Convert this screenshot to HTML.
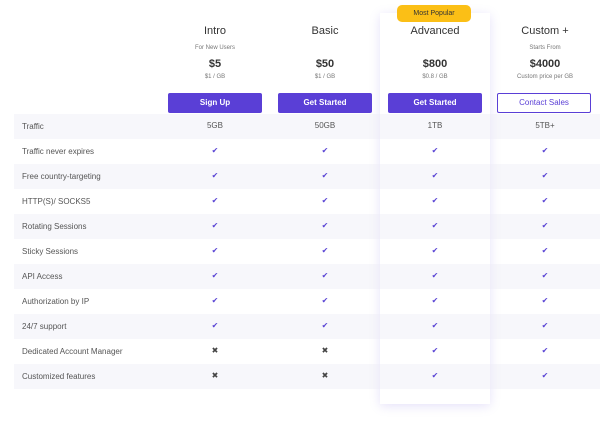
<!DOCTYPE html>
<html><head><style>
*{margin:0;padding:0;box-sizing:border-box}
body{width:612px;height:424px;background:#fff;font-family:"Liberation Sans",sans-serif;position:relative;overflow:hidden;color:#333}
.card{position:absolute;left:380px;top:13px;width:110px;height:391px;background:#fff;box-shadow:0 2px 10px rgba(110,90,220,.18);z-index:2}
.badge{position:absolute;left:397px;top:5px;width:74px;height:17px;background:#fbbf16;border-radius:5px;font-size:7px;text-align:center;line-height:17px;color:#333;z-index:5}
.row{position:absolute;left:14px;width:586px;height:25px;font-size:8px;color:#555;line-height:25px;z-index:3}
.row.s{background:rgba(235,235,245,.4)}
.row .l{position:absolute;left:8px}
.c{position:absolute;width:110px;text-align:center;z-index:4;font-size:8px;color:#555}
.t{position:absolute;width:110px;text-align:center;z-index:4}
.ck{color:#5a45d4;font-size:8px}
.x{color:#444;font-size:8px}
.btn{position:absolute;top:93px;width:94px;height:20px;background:#5a3fd6;color:#fff;font-size:8px;font-weight:bold;text-align:center;line-height:20px;border-radius:2px;z-index:4}
</style></head><body>
<div class="card"></div>
<div class="badge">Most Popular</div>

<div class="t" style="left:160px;top:25px;font-size:11px;color:#333">Intro</div>
<div class="t" style="left:270px;top:25px;font-size:11px;color:#333">Basic</div>
<div class="t" style="left:380px;top:25px;font-size:11px;color:#333">Advanced</div>
<div class="t" style="left:490px;top:25px;font-size:11px;color:#333">Custom +</div>

<div class="t" style="left:160px;top:45px;font-size:6px;color:#777">For New Users</div>
<div class="t" style="left:490px;top:45px;font-size:6px;color:#777">Starts From</div>

<div class="t" style="left:160px;top:58px;font-size:11px;font-weight:bold;color:#333">$5</div>
<div class="t" style="left:270px;top:58px;font-size:11px;font-weight:bold;color:#333">$50</div>
<div class="t" style="left:380px;top:58px;font-size:11px;font-weight:bold;color:#333">$800</div>
<div class="t" style="left:490px;top:58px;font-size:11px;font-weight:bold;color:#333">$4000</div>

<div class="t" style="left:160px;top:74px;font-size:6px;color:#777">$1 / GB</div>
<div class="t" style="left:270px;top:74px;font-size:6px;color:#777">$1 / GB</div>
<div class="t" style="left:380px;top:74px;font-size:6px;color:#777">$0.8 / GB</div>
<div class="t" style="left:490px;top:74px;font-size:6px;color:#777">Custom price per GB</div>

<div class="btn" style="left:168px">Sign Up</div>
<div class="btn" style="left:278px">Get Started</div>
<div class="btn" style="left:388px">Get Started</div>
<div class="btn" style="left:497px;background:#fff;color:#5a3fd6;border:1px solid #5a3fd6;line-height:18px;font-weight:normal">Contact Sales</div>

<div class="row s" style="top:114px"><span class="l">Traffic</span></div>
<div class="row" style="top:139px"><span class="l">Traffic never expires</span></div>
<div class="row s" style="top:164px"><span class="l">Free country-targeting</span></div>
<div class="row" style="top:189px"><span class="l">HTTP(S)/ SOCKS5</span></div>
<div class="row s" style="top:214px"><span class="l">Rotating Sessions</span></div>
<div class="row" style="top:239px"><span class="l">Sticky Sessions</span></div>
<div class="row s" style="top:264px"><span class="l">API Access</span></div>
<div class="row" style="top:289px"><span class="l">Authorization by IP</span></div>
<div class="row s" style="top:314px"><span class="l">24/7 support</span></div>
<div class="row" style="top:339px"><span class="l">Dedicated Account Manager</span></div>
<div class="row s" style="top:364px"><span class="l">Customized features</span></div>

<div class="c" style="left:160px;top:121px">5GB</div>
<div class="c" style="left:270px;top:121px">50GB</div>
<div class="c" style="left:380px;top:121px">1TB</div>
<div class="c" style="left:490px;top:121px">5TB+</div>

<div id="marks"></div>
<script>
var tops=[139,164,189,214,239,264,289,314,339,364],L=[160,270,380,490],h="";
tops.forEach(function(t,i){L.forEach(function(l,j){var x=(i>=8&&j<2);h+='<div class="c '+(x?'x':'ck')+'" style="left:'+l+'px;top:'+(t+7)+'px">'+(x?'✖':'✔')+'</div>';});});
document.getElementById('marks').innerHTML=h;
</script>
</body></html>
